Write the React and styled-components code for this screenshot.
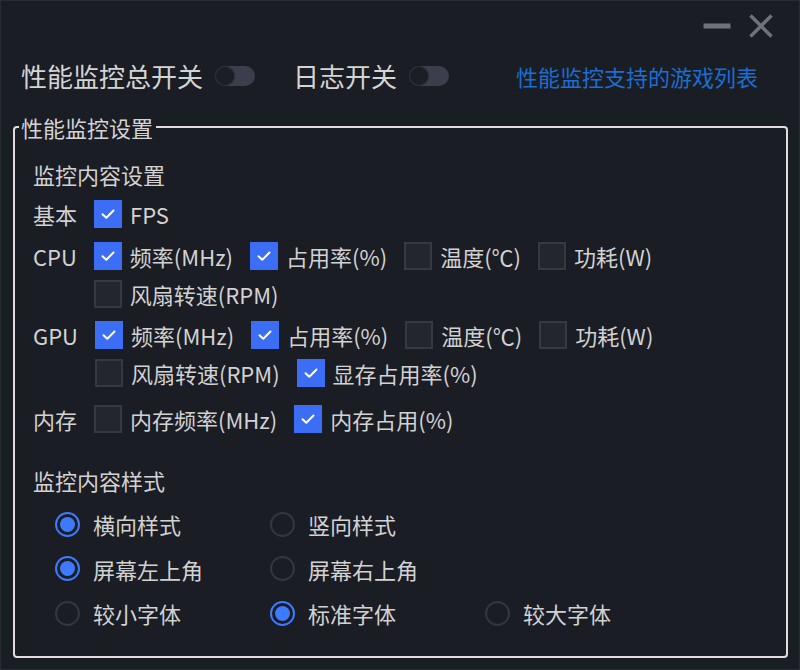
import React from 'react';
import styled, { createGlobalStyle } from 'styled-components';

const GlobalStyle = createGlobalStyle`
  html, body {
    margin: 0;
    padding: 0;
    background: #1b1d24;
  }
  * {
    box-sizing: border-box;
  }
`;

const Window = styled.div`
  width: 800px;
  height: 670px;
  background: #1b1d24;
  border: 1px solid #2a2c33;
  color: #d2d2d2;
  font-family: "Noto Sans CJK SC", "Noto Sans", sans-serif;
  display: flex;
  flex-direction: column;
  overflow: hidden;
`;

const TitleBar = styled.div`
  height: 50px;
  display: flex;
  align-items: center;
  justify-content: flex-end;
  gap: 16px;
  padding-right: 24px;
`;

const IconButton = styled.button`
  background: none;
  border: none;
  padding: 0;
  width: 28px;
  height: 26px;
  display: flex;
  align-items: center;
  justify-content: center;
  cursor: pointer;
`;

const SwitchRow = styled.div`
  height: 50px;
  display: flex;
  align-items: center;
  padding: 0 41px 0 20px;
`;

const SwitchLabel = styled.span`
  font-size: 26px;
  line-height: 34px;
  color: #d4d4d4;
  margin-right: 12px;
  margin-left: ${p => p.$first ? '0' : '38px'};
`;

const Toggle = styled.div`
  width: 40px;
  height: 20px;
  border-radius: 10px;
  background: #3a3f4b;
  position: relative;
  &::before {
    content: "";
    position: absolute;
    left: 0;
    top: 0;
    width: 20px;
    height: 20px;
    border-radius: 50%;
    background: #1c1e25;
    box-shadow: inset 0 0 0 1px #2f333c;
  }
`;

const Link = styled.a`
  margin-left: auto;
  font-size: 22px;
  line-height: 30px;
  color: #1a6ed4;
  text-decoration: none;
  cursor: pointer;
`;

const Fieldset = styled.fieldset`
  margin: 11px 11px 0 12px;
  border: 2px solid #dedede;
  border-radius: 4px;
  padding: 0 16px 30px 18px;
  min-width: 0;
`;

const Legend = styled.legend`
  font-size: 22px;
  line-height: 30px;
  color: #d4d4d4;
  padding: 0 3px 0 2px;
  margin-left: -14px;
`;

const SectionTitle = styled.div`
  font-size: 22px;
  line-height: 30px;
  color: #d2d2d2;
  margin-top: ${p => p.$top}px;
`;

const Group = styled.div`
  display: flex;
  align-items: flex-start;
  margin-top: ${p => p.$top}px;
`;

const GroupLabel = styled.div`
  font-size: 22px;
  line-height: 28px;
  margin-right: 17px;
  white-space: nowrap;
`;

const Items = styled.div`
  flex: 1;
  display: flex;
  flex-wrap: wrap;
  column-gap: 17px;
  row-gap: 10px;
`;

const CheckItem = styled.label`
  display: flex;
  align-items: center;
  gap: 8px;
  font-size: 22px;
  line-height: 28px;
  white-space: nowrap;
  cursor: pointer;
`;

const Box = styled.span`
  width: 28px;
  height: 28px;
  flex: none;
  display: flex;
  align-items: center;
  justify-content: center;
  background: ${p => p.$on ? '#3b6ef5' : '#23262d'};
  border: 2px solid ${p => p.$on ? '#3b6ef5' : '#363940'};
`;

const RadioGrid = styled.div`
  display: grid;
  grid-template-columns: repeat(3, 215px);
  row-gap: 18.5px;
  padding-left: 22px;
  margin-top: 16px;
`;

const RadioItem = styled.label`
  display: flex;
  align-items: center;
  gap: 13px;
  font-size: 22px;
  line-height: 26px;
  cursor: pointer;
`;

const Dot = styled.span`
  width: 25px;
  height: 25px;
  flex: none;
  border-radius: 50%;
  border: 2px solid ${p => p.$on ? '#3d7bff' : '#34373e'};
  display: flex;
  align-items: center;
  justify-content: center;
  &::after {
    content: "";
    width: 15px;
    height: 15px;
    border-radius: 50%;
    background: ${p => p.$on ? '#3d7aff' : 'transparent'};
  }
`;

const Check = ({ label, on }) => (
  <CheckItem>
    <Box $on={on}>
      {on && (
        <svg width="16" height="12" viewBox="0 0 16 12">
          <path d="M2.5 6.2l3.8 3.6L13.5 2.5" fill="none" stroke="#fff" strokeWidth="2" strokeLinecap="round" strokeLinejoin="round" />
        </svg>
      )}
    </Box>
    {label}
  </CheckItem>
);

const Radio = ({ label, on }) => (
  <RadioItem>
    <Dot $on={on} />
    {label}
  </RadioItem>
);

const groups = [
  { name: '基本', top: 11, items: [['FPS', true]] },
  { name: 'CPU', top: 14, items: [['频率(MHz)', true], ['占用率(%)', true], ['温度(℃)', false], ['功耗(W)', false], ['风扇转速(RPM)', false]] },
  { name: 'GPU', top: 13, items: [['频率(MHz)', true], ['占用率(%)', true], ['温度(℃)', false], ['功耗(W)', false], ['风扇转速(RPM)', false], ['显存占用率(%)', true]] },
  { name: '内存', top: 18, items: [['内存频率(MHz)', false], ['内存占用(%)', true]] },
];

const radios = [
  ['横向样式', true], ['竖向样式', false], null,
  ['屏幕左上角', true], ['屏幕右上角', false], null,
  ['较小字体', false], ['标准字体', true], ['较大字体', false],
];

export default function App() {
  return (
    <>
      <GlobalStyle />
      <Window>
        <TitleBar>
          <IconButton aria-label="minimize">
            <svg width="28" height="8" viewBox="0 0 28 8">
              <rect x="0.5" y="1.5" width="27" height="5" fill="#6e7279" />
            </svg>
          </IconButton>
          <IconButton aria-label="close">
            <svg width="26" height="26" viewBox="0 0 26 26">
              <path d="M2.5 2.5l21 21M23.5 2.5l-21 21" stroke="#6e7279" strokeWidth="3.4" />
            </svg>
          </IconButton>
        </TitleBar>

        <SwitchRow>
          <SwitchLabel $first>性能监控总开关</SwitchLabel>
          <Toggle />
          <SwitchLabel>日志开关</SwitchLabel>
          <Toggle />
          <Link>性能监控支持的游戏列表</Link>
        </SwitchRow>

        <Fieldset>
          <Legend>性能监控设置</Legend>
          <SectionTitle $top={17}>监控内容设置</SectionTitle>
          {groups.map(g => (
            <Group key={g.name} $top={g.top}>
              <GroupLabel>{g.name}</GroupLabel>
              <Items>
                {g.items.map(([label, on]) => (
                  <Check key={label} label={label} on={on} />
                ))}
              </Items>
            </Group>
          ))}

          <SectionTitle $top={32}>监控内容样式</SectionTitle>
          <RadioGrid>
            {radios.map((r, i) =>
              r ? <Radio key={i} label={r[0]} on={r[1]} /> : <span key={i} />
            )}
          </RadioGrid>
        </Fieldset>
      </Window>
    </>
  );
}
